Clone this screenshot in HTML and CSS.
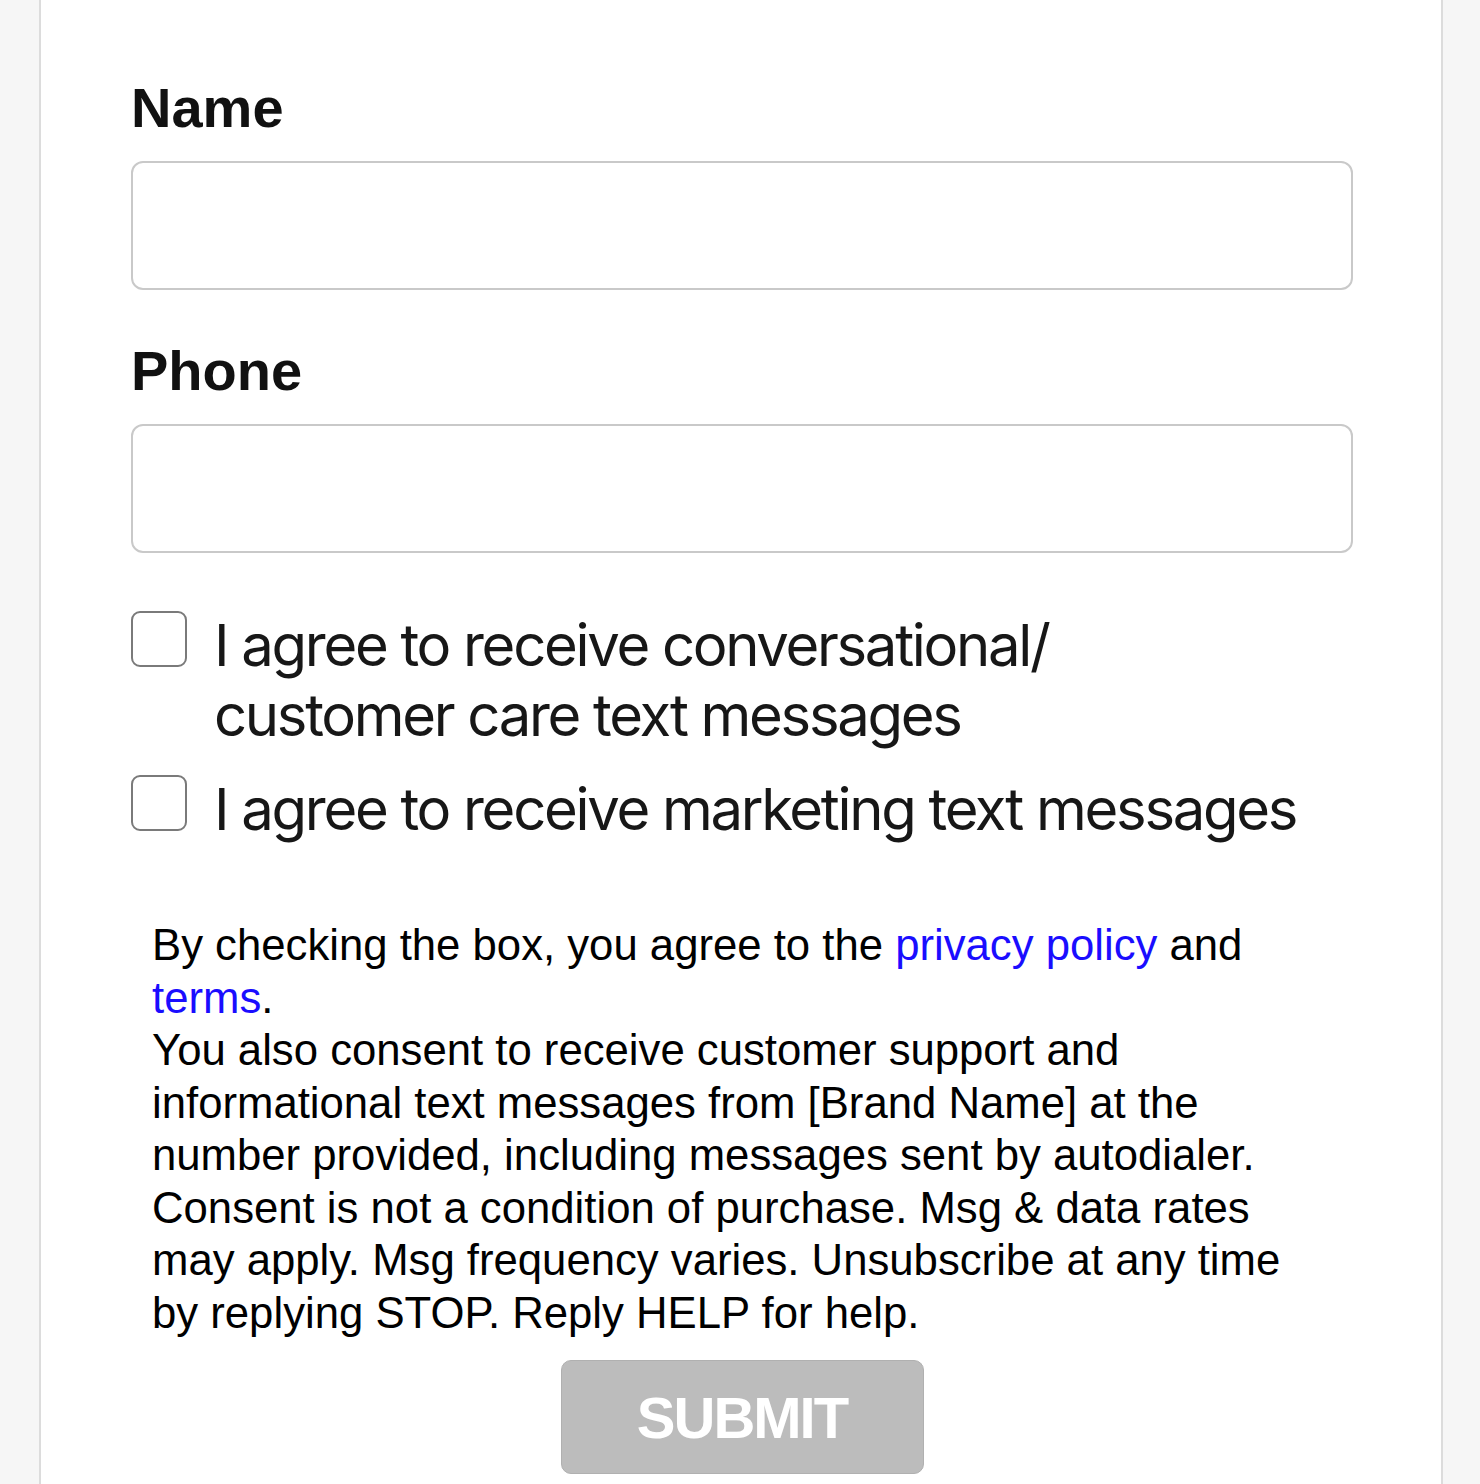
FILE: index.html
```html
<!DOCTYPE html>
<html>
<head>
<meta charset="utf-8">
<link rel="stylesheet" href="styles.css">
</head>
<body>
<div class="card">
  <form class="form">
    <div class="field">
      <label class="label">Name</label>
      <div class="input"></div>
    </div>
    <div class="field">
      <label class="label">Phone</label>
      <div class="input"></div>
    </div>
    <div class="checks">
      <div class="check">
        <span class="box"></span>
        <span class="check-text">I agree to receive conversational/<br>customer care text messages</span>
      </div>
      <div class="check">
        <span class="box"></span>
        <span class="check-text">I agree to receive marketing text messages</span>
      </div>
    </div>
    <p class="legal">By checking the box, you agree to the <a class="link">privacy policy</a> and <a class="link">terms</a>.<br>You also consent to receive customer support and informational text messages from [Brand Name] at the number provided, including messages sent by autodialer. Consent is not a condition of purchase. Msg &amp; data rates may apply. Msg frequency varies. Unsubscribe at any time by replying STOP. Reply HELP for help.</p>
    <div class="actions">
      <div class="submit">SUBMIT</div>
    </div>
  </form>
</div>
</body>
</html>
```
FILE: styles.css
```css
html, body {
  margin: 0;
  padding: 0;
}
body {
  background: #f6f6f6;
  height: 1484px;
  overflow: hidden;
}
.card {
  margin: -20px 0 0 39px;
  width: 1404px;
  height: 1600px;
  background: #fff;
  border: 2px solid #dcdcdc;
  border-radius: 16px;
  box-sizing: border-box;
  padding: 94px 88px 0 90px;
}
.form {
  display: flex;
  flex-direction: column;
}
.field {
  display: flex;
  flex-direction: column;
  gap: 21px;
  margin-bottom: 49px;
}
.field + .field {
  margin-bottom: 58px;
}
.label {
  font-family: "Liberation Sans", Arial, sans-serif;
  font-weight: 700;
  font-size: 56px;
  line-height: 64px;
  color: #111;
}
.input {
  height: 125px;
  border: 2px solid #c9c9c9;
  border-radius: 12px;
}
.checks {
  display: flex;
  flex-direction: column;
  gap: 25px;
}
.check {
  display: flex;
  align-items: flex-start;
  gap: 27px;
}
.box {
  flex: none;
  width: 52px;
  height: 52px;
  border: 2px solid #7a7a7a;
  border-radius: 9px;
  background: #fff;
}
.check-text {
  font-family: Inter, "Noto Sans", sans-serif;
  font-size: 58px;
  letter-spacing: -2.3px;
  line-height: 70px;
  color: #171717;
  margin-top: -1px;
}
.legal {
  width: 1160px;
  margin: 75px 0 0 21px;
  font-family: "Liberation Sans", Arial, sans-serif;
  font-size: 43.7px;
  line-height: 52.5px;
  color: #000;
}
.link {
  color: #1a0dff;
}
.actions {
  display: flex;
  justify-content: center;
  margin-top: 21px;
}
.submit {
  width: 363px;
  height: 114px;
  box-sizing: border-box;
  background: #bcbcbc;
  border: 1px solid #b0b0b0;
  border-radius: 10px;
  color: #fff;
  font-family: "Liberation Sans", Arial, sans-serif;
  font-weight: 700;
  font-size: 58px;
  letter-spacing: -2px;
  display: flex;
  align-items: center;
  justify-content: center;
}
```
